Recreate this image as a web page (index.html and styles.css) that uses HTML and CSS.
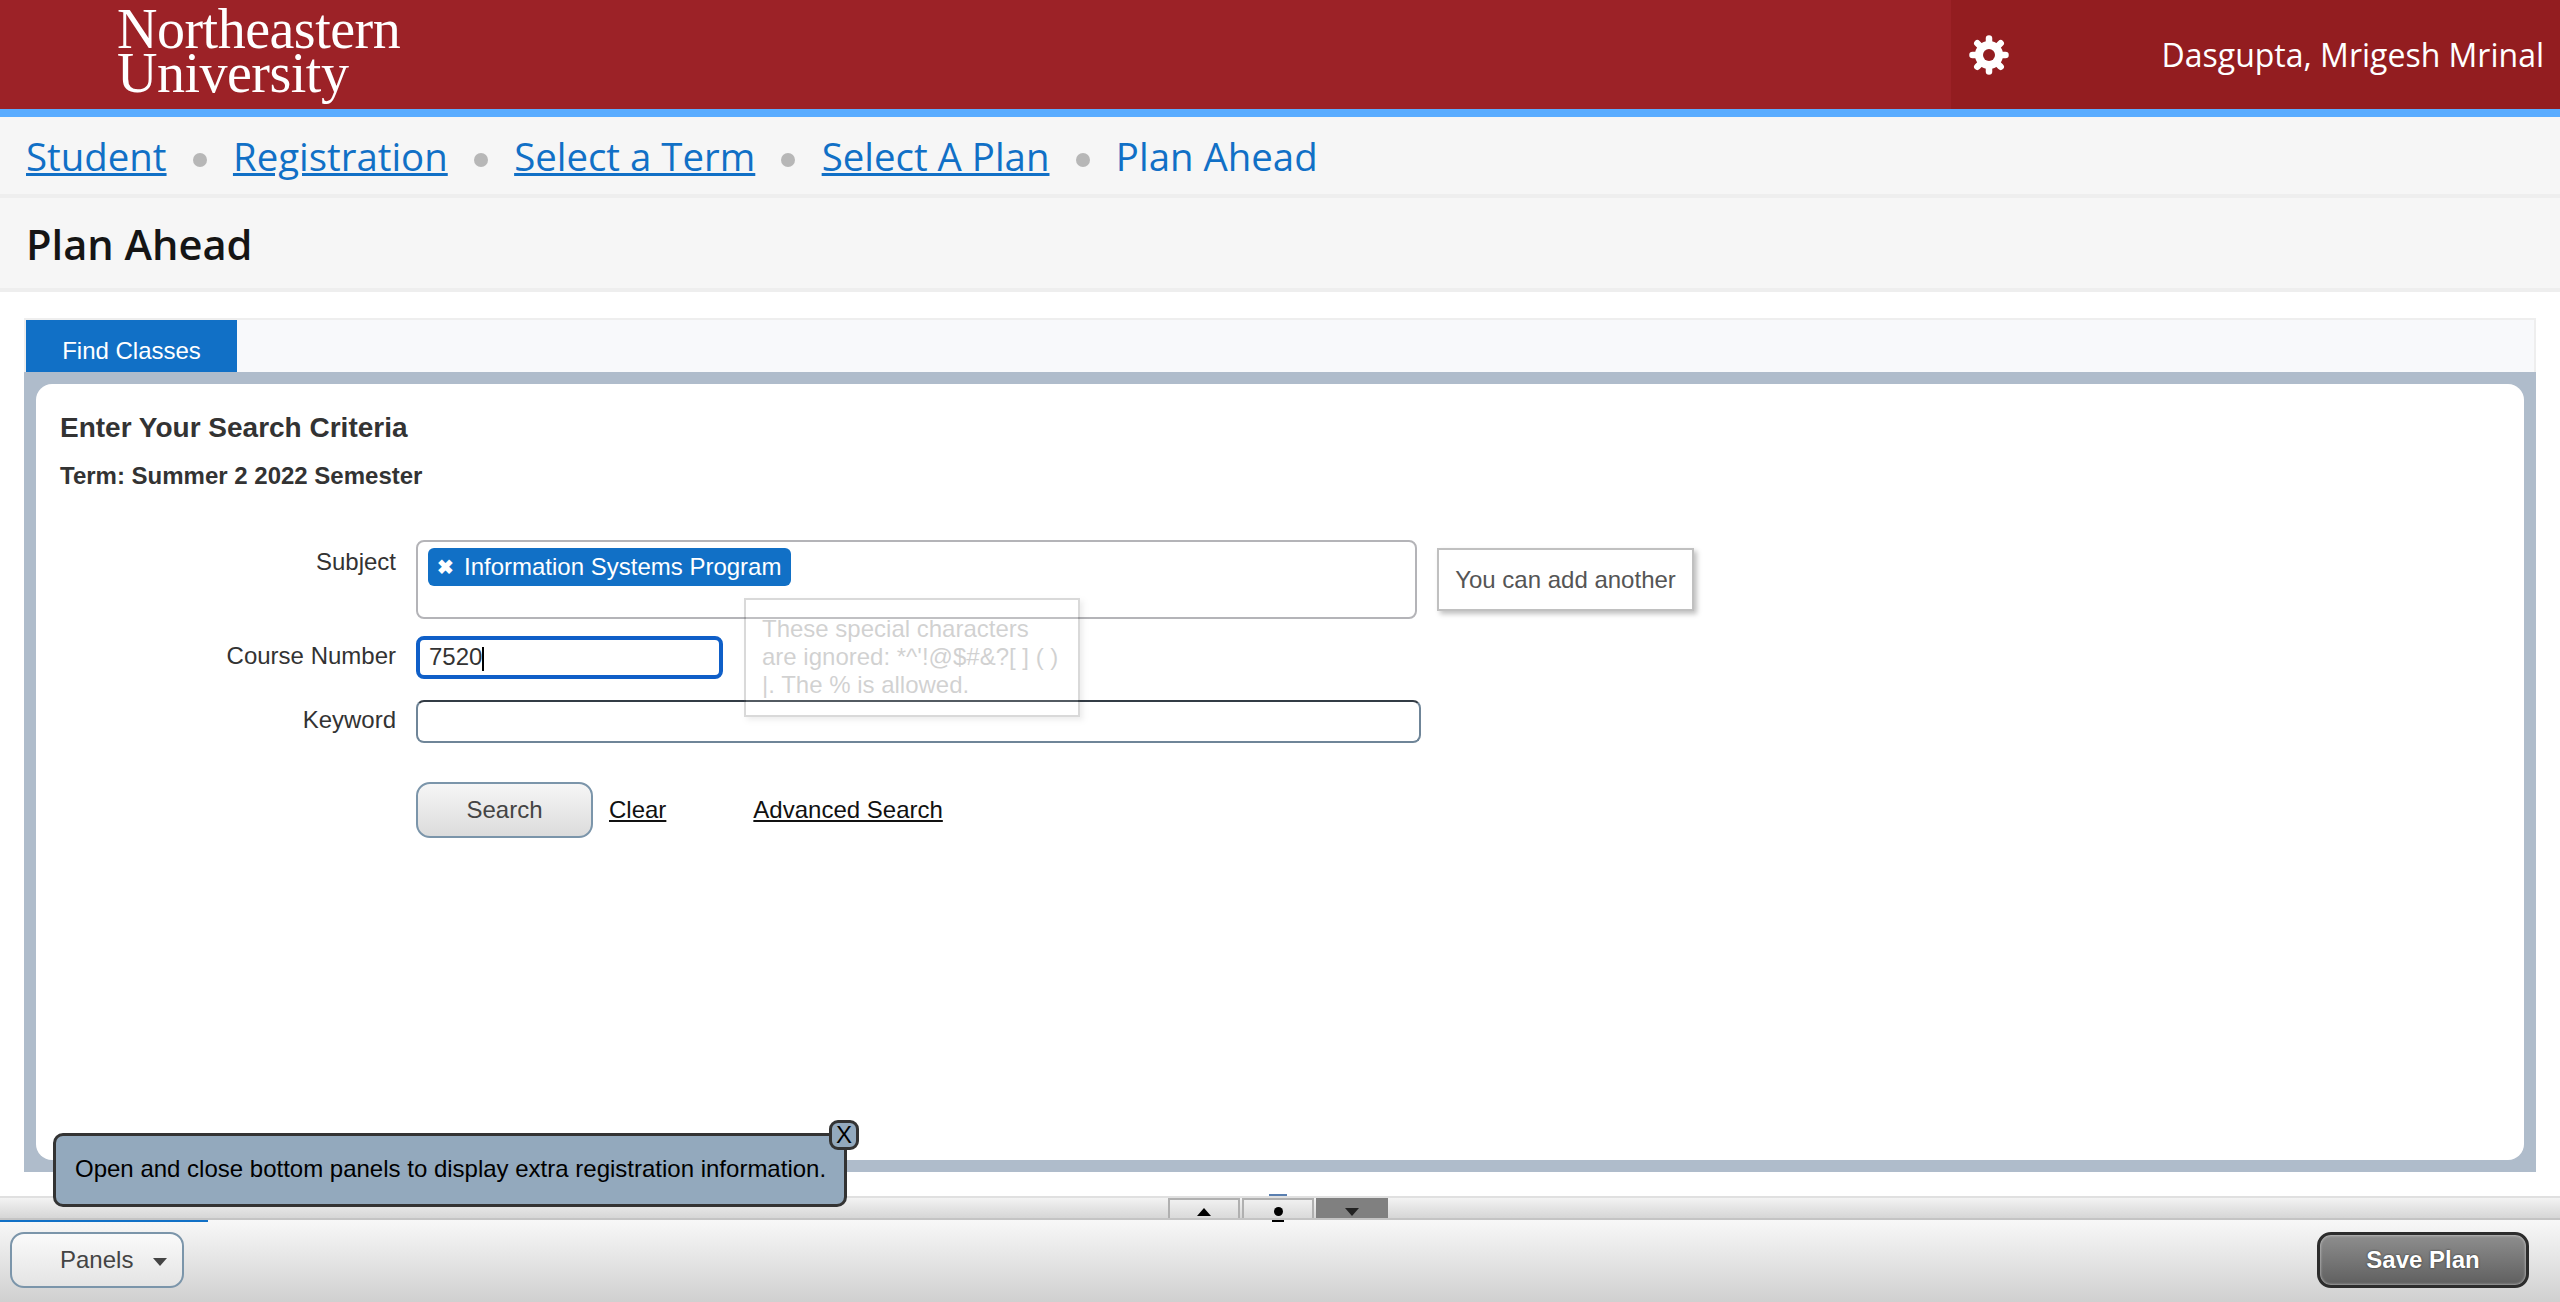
FILE: index.html
```html
<!DOCTYPE html>
<html>
<head>
	<meta charset="utf-8" />
	<title>Plan Ahead</title>
	<link rel="stylesheet" href="styles.css">
</head>
<body>
<div class="header">
	<div class="logo">Northeastern<br>University</div>
	<div class="user">
		<svg class="gear" viewBox="0 0 40 40" width="40" height="40">
			<g stroke="#fff" stroke-width="6.5" stroke-linecap="round">
				<line x1="20" y1="3.5" x2="20" y2="36.5"/>
				<line x1="3.5" y1="20" x2="36.5" y2="20"/>
				<line x1="8.3" y1="8.3" x2="31.7" y2="31.7"/>
				<line x1="31.7" y1="8.3" x2="8.3" y2="31.7"/>
			</g>
			<circle cx="20" cy="20" r="10" fill="none" stroke="#fff" stroke-width="8"/>
			<circle cx="20" cy="20" r="6" fill="#931d20"/>
		</svg>
		<span class="username">Dasgupta, Mrigesh Mrinal</span>
	</div>
</div>
<div class="crumbs">
	<a href="#">Student</a><i></i>
	<a href="#">Registration</a><i></i>
	<a href="#">Select a Term</a><i></i>
	<a href="#">Select A Plan</a><i></i>
	<span>Plan Ahead</span>
</div>
<div class="titlebar"><h1>Plan Ahead</h1></div>
<div class="main">
	<div class="tabs"><a href="#" class="tab">Find Classes</a></div>
	<div class="frame">
		<div class="panel">
			<h2>Enter Your Search Criteria</h2>
			<div class="term">Term: Summer 2 2022 Semester</div>
			<div class="form">
				<div class="row subject-row">
					<label>Subject</label>
					<div class="select-box">
						<span class="chip"><b>&#10006;</b>Information Systems Program</span>
					</div>
					<div class="add-tip">You can add another</div>
				</div>
				<div class="row course-row">
					<label>Course Number</label>
					<div class="course-input">7520<span class="caret"></span></div>
					<div class="char-tip">These special characters are ignored: *^'!@$#&amp;?[ ] ( ) |. The % is allowed.</div>
				</div>
				<div class="row keyword-row">
					<label>Keyword</label>
					<input type="text" class="keyword">
				</div>
				<div class="row actions">
					<button class="search-btn">Search</button>
					<a href="#" class="clear">Clear</a>
					<a href="#" class="advanced">Advanced Search</a>
				</div>
			</div>
		</div>
	</div>
</div>
<div class="tooltip">
	Open and close bottom panels to display extra registration information.
	<span class="tooltip-x">X</span>
</div>
<div class="splitter">
	<div class="split-btns">
		<div class="split-btn"><span class="up"></span></div>
		<div class="split-btn mid"><span class="dot"></span></div>
		<div class="split-btn on"><span class="down"></span></div>
	</div>
</div>
<div class="footer">
	<button class="panels-btn">Panels<span class="caret-down"></span></button>
	<button class="save-btn">Save Plan</button>
</div>
</body>
</html>
```
FILE: styles.css
```css
*{
margin:0;
padding:0;
box-sizing:border-box;
}
html,body{
height:100%;
}
body{
display:flex;
flex-direction:column;
height:1302px;
overflow:hidden;
background:#fff;
font-family:"Liberation Sans",Arial,sans-serif;
font-size:24px;
color:#333;
position:relative;
}

/* header */
.header{
height:117px;
flex:none;
background:#9c2227;
border-bottom:8px solid #5aacff;
display:flex;
justify-content:space-between;
}
.logo{
font-family:"Liberation Serif",serif;
font-size:56px;
line-height:44px;
letter-spacing:-.5px;
color:#fff;
padding:7px 0 0 117px;
}
.user{
width:609px;
background:#931d20;
display:flex;
align-items:center;
justify-content:space-between;
padding:0 16px 0 18px;
}
.username{
font-family:"Open Sans",sans-serif;
font-size:32px;
color:#fff;
}

/* breadcrumbs */
.crumbs{
height:81px;
flex:none;
background:#f6f6f6;
border-bottom:4px solid #eee;
padding-left:26px;
display:flex;
align-items:center;
gap:26.2px;
font-family:"Open Sans",sans-serif;
font-size:38.4px;
color:#1170c6;
}
.crumbs a{
color:#1170c6;
}
.crumbs i{
width:14px;
height:14px;
border-radius:50%;
background:#b7b7b7;
margin-top:8px;
}
.titlebar{
height:94px;
flex:none;
background:#f6f6f6;
border-bottom:4px solid #eee;
padding:2px 0 0 26px;
display:flex;
align-items:center;
}
h1{
font-family:"Open Sans",sans-serif;
font-size:41.6px;
font-weight:600;
color:#151515;
}

/* main area */
.main{
flex:1;
padding:26px 24px 24px;
display:flex;
flex-direction:column;
min-height:0;
}
.tabs{
height:54px;
flex:none;
background:#f8f9fb;
border:2px solid #eee;
border-bottom:0;
}
.tab{
display:block;
width:211px;
height:52px;
background:#1170c6;
color:#fff;
text-decoration:none;
text-align:center;
line-height:62px;
}
.frame{
flex:1;
background:#afbccb;
padding:12px;
display:flex;
}
.panel{
flex:1;
background:#fff;
border-radius:16px;
padding:28px 23px 0 24px;
}
h2{
font-size:28px;
line-height:32px;
font-weight:bold;
color:#333;
}
.term{
margin-top:18px;
font-weight:bold;
line-height:28px;
color:#333;
}

/* form */
.form{
margin-top:50px;
}
.row{
display:flex;
align-items:flex-start;
position:relative;
}
.row label{
width:336px;
text-align:right;
margin-right:20px;
line-height:28px;
}
.subject-row label{
margin-top:8px;
}
.course-row,
.keyword-row{
margin-top:17px;
}
.course-row label{
margin-top:6px;
}
.keyword-row{
margin-top:21px;
}
.keyword-row label{
margin-top:6px;
}
.select-box{
width:1001px;
height:79px;
border:2px solid #b4b4b8;
border-radius:8px;
padding:6px 10px;
}
.chip{
display:inline-flex;
align-items:center;
height:38px;
padding:0 10px 0 9px;
background:#1170c6;
color:#fff;
border-radius:6px;
}
.chip b{
font-size:20px;
width:27px;
}
.add-tip{
width:257px;
height:63px;
margin:8px 0 0 20px;
border:2px solid #c0c0c0;
box-shadow:3px 3px 5px rgba(0,0,0,.25);
color:#555;
text-align:center;
line-height:59px;
background:#fff;
}
.course-input{
width:307px;
height:43px;
border:4px solid #0f5fc8;
border-radius:8px;
padding-left:9px;
line-height:33px;
color:#333;
}
.caret{
display:inline-block;
width:2px;
height:24px;
background:#000;
vertical-align:middle;
}
.char-tip{
position:absolute;
left:684px;
top:-38px;
width:336px;
height:119px;
padding:15px 16px 0 16px;
font-size:24px;
line-height:28px;
color:#333;
background:rgba(255,255,255,.72);
border:2px solid #555;
box-shadow:3px 3px 5px rgba(0,0,0,.3);
opacity:.22;
z-index:2;
}
.keyword{
width:1005px;
height:43px;
border:2px solid #6f8598;
border-top-color:#333c45;
border-radius:8px;
background:#fff;
outline:0;
}
.actions{
margin-top:39px;
padding-left:356px;
align-items:center;
}
.search-btn{
width:177px;
height:56px;
border:2px solid #7b95aa;
border-radius:14px;
background:linear-gradient(#f6f6f6,#dcdcdc);
font-family:inherit;
font-size:24px;
color:#444;
}
.clear{
margin-left:16px;
color:#111;
}
.advanced{
margin-left:87px;
color:#111;
}

/* tooltip over the bottom bars */
.tooltip{
position:absolute;
left:53px;
top:1133px;
width:794px;
height:74px;
background:#93a9bd;
border:3px solid #333;
border-radius:10px;
color:#000;
line-height:66px;
padding-left:19px;
z-index:3;
white-space:nowrap;
}
.tooltip-x{
position:absolute;
left:773px;
top:-16px;
width:30px;
height:30px;
border:3px solid #333;
border-radius:9px;
background:#93a9bd;
text-align:center;
line-height:24px;
}

/* splitter and footer */
.splitter{
height:24px;
flex:none;
background:linear-gradient(#f3f3f3,#d6d6d6);
border-top:2px solid #e0e0e0;
border-bottom:2px solid #c4c4c4;
padding-left:1168px;
position:relative;
}
.splitter:before{
content:"";
position:absolute;
left:0;
bottom:-4px;
width:208px;
height:2px;
background:#1170c6;
}
.split-btns{
display:flex;
gap:2px;
height:20px;
}
.split-btn{
width:72px;
border:2px solid #b0b0b0;
border-bottom:0;
background:linear-gradient(#f0f0f0,#dadada);
display:flex;
align-items:flex-end;
justify-content:center;
padding-bottom:2px;
}
.split-btn.on{
background:#808080;
border-color:#808080;
}
.mid{
position:relative;
}
.mid:before,
.mid:after{
content:"";
position:absolute;
width:18px;
height:2px;
left:25px;
}
.mid:before{
top:-6px;
background:#5a7fb0;
}
.mid:after{
width:12px;
left:28px;
bottom:-4px;
background:#000;
}
.up,.down{
width:0;
height:0;
border-left:7px solid transparent;
border-right:7px solid transparent;
}
.up{
border-bottom:8px solid #000;
}
.down{
border-top:8px solid #222;
}
.dot{
width:9px;
height:9px;
border-radius:50%;
background:#000;
}
.footer{
height:82px;
flex:none;
background:linear-gradient(#f8f8f8,#d0d0d0);
display:flex;
justify-content:space-between;
align-items:flex-start;
padding:12px 31px 0 10px;
}
.panels-btn{
width:174px;
height:56px;
border:2px solid #7b95aa;
border-radius:14px;
background:linear-gradient(#fafafa,#e4e4e4);
font-family:inherit;
font-size:24px;
color:#444;
text-align:left;
padding-left:48px;
}
.caret-down{
display:inline-block;
width:0;
height:0;
border-left:7px solid transparent;
border-right:7px solid transparent;
border-top:8px solid #444;
margin-left:20px;
vertical-align:middle;
}
.save-btn{
width:212px;
height:56px;
border:3px solid #2c2c2c;
border-radius:14px;
background:linear-gradient(#8e8e8e,#5f5f5f);
box-shadow:inset 0 0 3px #ddd;
font-family:inherit;
font-size:24px;
font-weight:bold;
color:#fff;
text-shadow:0 0 2px #222;
}
```
